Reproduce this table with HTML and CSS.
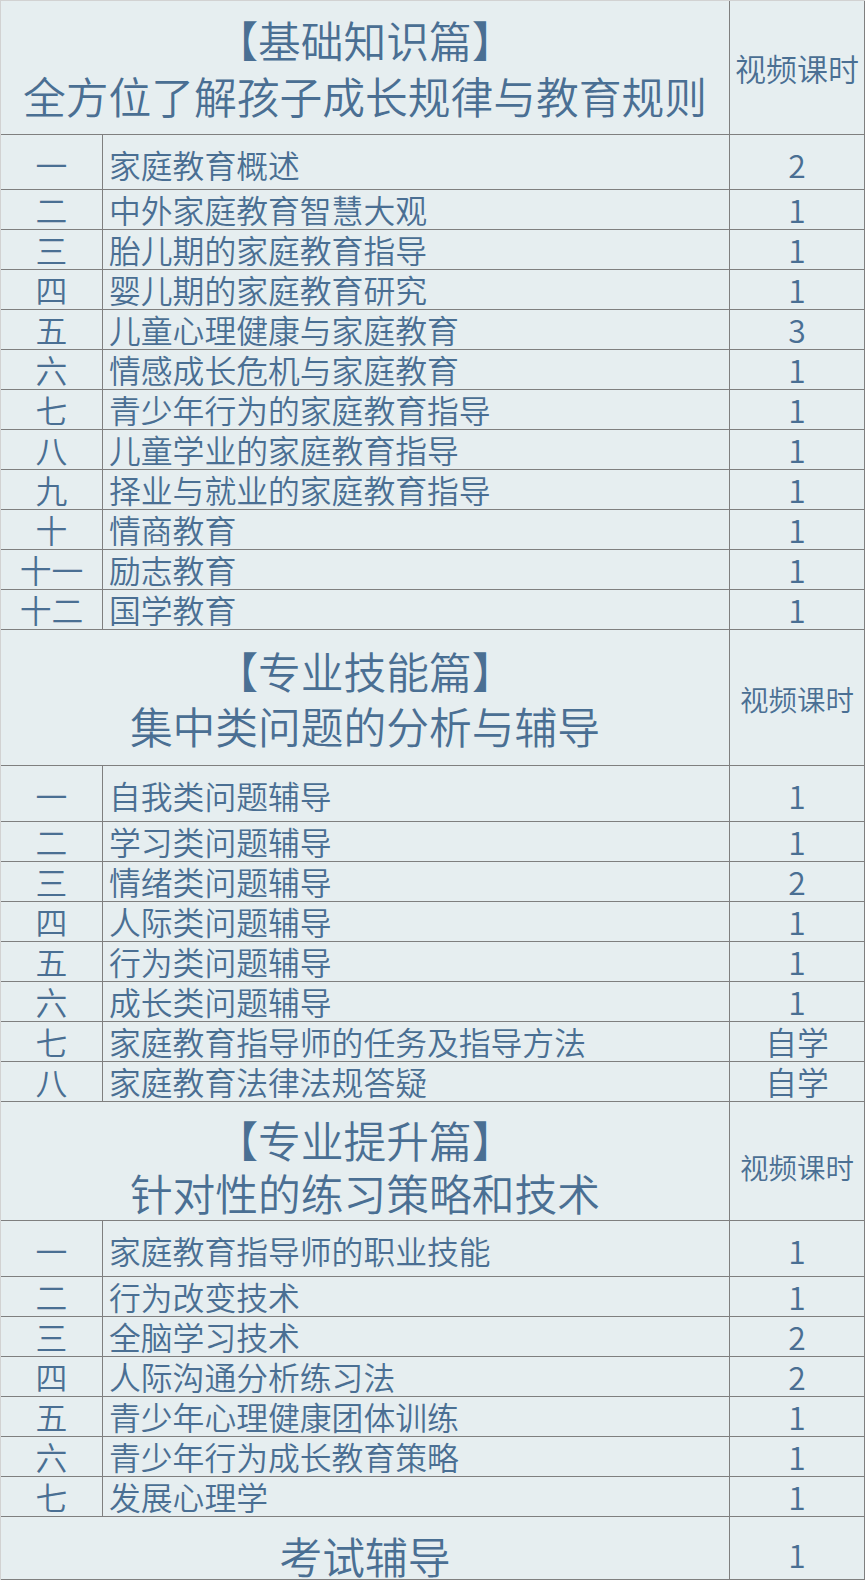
FILE: index.html
```html
<!DOCTYPE html>
<html lang="zh-CN">
<head>
<meta charset="utf-8">
<title>课程表</title>
<link rel="stylesheet" href="styles.css">
</head>
<body>
<div class="sheet">
  <div class="cell title t1"><div class="tl">【基础知识篇】</div><div class="tl">全方位了解孩子成长规律与教育规则</div></div>
  <div class="cell hv hv1">视频课时</div>

  <div class="cell n first">一</div><div class="cell t first">家庭教育概述</div><div class="cell h first">2</div>
  <div class="cell n">二</div><div class="cell t">中外家庭教育智慧大观</div><div class="cell h">1</div>
  <div class="cell n">三</div><div class="cell t">胎儿期的家庭教育指导</div><div class="cell h">1</div>
  <div class="cell n">四</div><div class="cell t">婴儿期的家庭教育研究</div><div class="cell h">1</div>
  <div class="cell n">五</div><div class="cell t">儿童心理健康与家庭教育</div><div class="cell h">3</div>
  <div class="cell n">六</div><div class="cell t">情感成长危机与家庭教育</div><div class="cell h">1</div>
  <div class="cell n">七</div><div class="cell t">青少年行为的家庭教育指导</div><div class="cell h">1</div>
  <div class="cell n">八</div><div class="cell t">儿童学业的家庭教育指导</div><div class="cell h">1</div>
  <div class="cell n">九</div><div class="cell t">择业与就业的家庭教育指导</div><div class="cell h">1</div>
  <div class="cell n">十</div><div class="cell t">情商教育</div><div class="cell h">1</div>
  <div class="cell n">十一</div><div class="cell t">励志教育</div><div class="cell h">1</div>
  <div class="cell n">十二</div><div class="cell t">国学教育</div><div class="cell h">1</div>

  <div class="cell title t2"><div class="tl">【专业技能篇】</div><div class="tl">集中类问题的分析与辅导</div></div>
  <div class="cell hv hv2">视频课时</div>

  <div class="cell n first">一</div><div class="cell t first">自我类问题辅导</div><div class="cell h first">1</div>
  <div class="cell n">二</div><div class="cell t">学习类问题辅导</div><div class="cell h">1</div>
  <div class="cell n">三</div><div class="cell t">情绪类问题辅导</div><div class="cell h">2</div>
  <div class="cell n">四</div><div class="cell t">人际类问题辅导</div><div class="cell h">1</div>
  <div class="cell n">五</div><div class="cell t">行为类问题辅导</div><div class="cell h">1</div>
  <div class="cell n">六</div><div class="cell t">成长类问题辅导</div><div class="cell h">1</div>
  <div class="cell n">七</div><div class="cell t">家庭教育指导师的任务及指导方法</div><div class="cell h">自学</div>
  <div class="cell n">八</div><div class="cell t">家庭教育法律法规答疑</div><div class="cell h">自学</div>

  <div class="cell title t3"><div class="tl">【专业提升篇】</div><div class="tl">针对性的练习策略和技术</div></div>
  <div class="cell hv hv3">视频课时</div>

  <div class="cell n first">一</div><div class="cell t first">家庭教育指导师的职业技能</div><div class="cell h first">1</div>
  <div class="cell n">二</div><div class="cell t">行为改变技术</div><div class="cell h">1</div>
  <div class="cell n">三</div><div class="cell t">全脑学习技术</div><div class="cell h">2</div>
  <div class="cell n">四</div><div class="cell t">人际沟通分析练习法</div><div class="cell h">2</div>
  <div class="cell n">五</div><div class="cell t">青少年心理健康团体训练</div><div class="cell h">1</div>
  <div class="cell n">六</div><div class="cell t">青少年行为成长教育策略</div><div class="cell h">1</div>
  <div class="cell n">七</div><div class="cell t">发展心理学</div><div class="cell h">1</div>

  <div class="cell exam">考试辅导</div><div class="cell h last">1</div>
</div>
</body>
</html>
```
FILE: styles.css
```css
html, body {
  margin: 0;
  padding: 0;
  background: #e6eef0;
}

.sheet {
  width: 865px;
  height: 1580px;
  box-sizing: border-box;
  display: grid;
  grid-template-columns: 101px 626px 134px;
  grid-template-rows:
    133px 54px repeat(11, 39px)
    135px 55px repeat(7, 39px)
    118px 55px repeat(6, 39px)
    62px;
  gap: 1px;
  background: #7f7f7f;
  border-top: 1px solid #d2d2d2;
  border-left: 1px solid #d2d2d2;
  padding: 0 1px 1px 0;
  font-family: "Noto Sans CJK SC", "Noto Sans", sans-serif;
  font-weight: 350;
  color: #4a6f93;
}

.cell {
  background: #e6eef0;
  display: flex;
  align-items: center;
  white-space: nowrap;
  font-size: 31.8px;
  line-height: 1;
  box-sizing: border-box;
}

.n {
  justify-content: center;
}

.t {
  padding-left: 6px;
}

.h {
  justify-content: center;
}

.first {
  padding-top: 5px;
}

.title {
  grid-column: 1 / 3;
  flex-direction: column;
  justify-content: center;
  align-items: center;
  font-size: 42.75px;
}

.tl {
  line-height: 56px;
}

.t1 {
  padding-bottom: 1px;
}

.t2 {
  padding-top: 0;
}

.t2 .tl {
  line-height: 55px;
}

.t3 {
  padding-top: 10px;
}

.t3 .tl {
  line-height: 53px;
}

.hv {
  justify-content: center;
}

.hv1 {
  font-size: 31px;
}

.hv2 {
  font-size: 28.5px;
  padding-top: 3px;
}

.hv3 {
  font-size: 28.5px;
  padding-top: 12px;
}

.exam {
  grid-column: 1 / 3;
  justify-content: center;
  font-size: 42.75px;
  padding-top: 14px;
}

.last {
  padding-top: 14px;
}
```
